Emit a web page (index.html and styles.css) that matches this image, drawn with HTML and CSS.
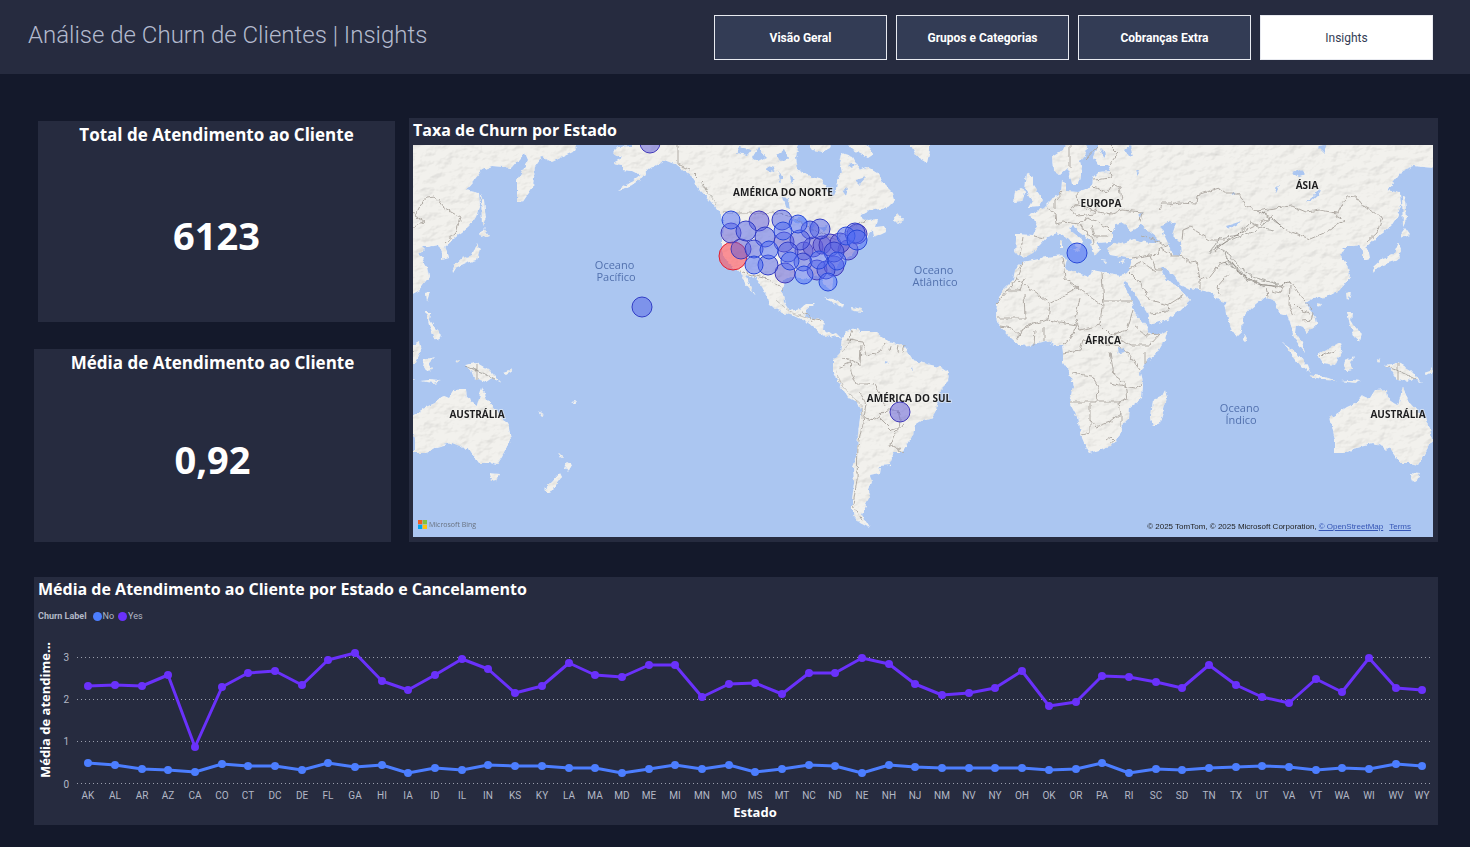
FILE: index.html
```html
<!DOCTYPE html>
<html lang="pt-BR">
<head>
<meta charset="utf-8">
<title>Análise de Churn de Clientes | Insights</title>
<link rel="stylesheet" href="styles.css">
</head>
<body>
<header class="topbar">
  <h1 class="page-title">Análise de Churn de Clientes | Insights</h1>
  <nav class="tabs">
    <button class="tab" type="button">Visão Geral</button>
    <button class="tab" type="button">Grupos e Categorias</button>
    <button class="tab" type="button">Cobranças Extra</button>
    <button class="tab tab-active" type="button" aria-current="page">Insights</button>
  </nav>
</header>
<main class="board">
  <div class="row">
    <div class="cards">
      <section class="card card-total">
        <h2 class="card-title">Total de Atendimento ao Cliente</h2>
        <p class="card-value">6123</p>
      </section>
      <section class="card card-average">
        <h2 class="card-title">Média de Atendimento ao Cliente</h2>
        <p class="card-value">0,92</p>
      </section>
    </div>
    <section class="panel map-panel">
      <h2 class="panel-title">Taxa de Churn por Estado</h2>
      <div class="map">
        <svg class="map-svg" viewBox="413 145 1020 392" role="img" aria-label="Mapa da taxa de churn por estado">
          <defs>
            <filter id="terrain" filterUnits="userSpaceOnUse" x="400" y="135" width="1110" height="410" color-interpolation-filters="sRGB">
              <feTurbulence type="fractalNoise" baseFrequency="0.18" numOctaves="2" seed="4" result="n"/>
              <feDisplacementMap in="SourceGraphic" in2="n" scale="5" xChannelSelector="R" yChannelSelector="G" result="land"/>
              <feTurbulence type="fractalNoise" baseFrequency="0.07 0.11" numOctaves="4" seed="9" result="h"/>
              <feColorMatrix in="h" type="matrix" values="0 0 0 0 0  0 0 0 0 0  0 0 0 0 0  1 0 0 0 0" result="ha"/>
              <feDiffuseLighting in="ha" surfaceScale="0.5" diffuseConstant="1.15" lighting-color="#ffffff" result="lit">
                <feDistantLight azimuth="225" elevation="60"/>
              </feDiffuseLighting>
              <feBlend in="land" in2="lit" mode="multiply" result="m"/>
              <feComposite in="m" in2="land" operator="in"/>
            </filter>
            <filter id="rough" filterUnits="userSpaceOnUse" x="400" y="135" width="1110" height="410" color-interpolation-filters="sRGB">
              <feTurbulence type="fractalNoise" baseFrequency="0.18" numOctaves="2" seed="4" result="n"/>
              <feDisplacementMap in="SourceGraphic" in2="n" scale="5" xChannelSelector="R" yChannelSelector="G"/>
            </filter>
            <g id="east">
              <path d="M1180 140L1180 285 1190 288 1200 290 1213 293 1218 300 1225 302 1228 320 1232 330 1237 337 1242 332 1243 317 1250 309 1257 303 1265 297 1273 300 1280 313 1287 315 1290 322 1293 334 1297 343 1305 353 1302 342 1296 333 1297 325 1302 327 1307 333 1317 325 1316 317 1309 309 1305 303 1313 298 1327 297 1340 290 1350 277 1348 267 1340 254 1345 250 1342 247 1350 247 1360 245 1363 252 1363 260 1370 258 1369 253 1366 247 1377 237 1383 233 1391 226 1397 217 1401 205 1400 193 1387 190 1394 182 1403 170 1413 166 1433 168 1446 153 1449 160 1438 180 1438 203 1443 203 1454 187 1456 167 1463 157 1473 162 1498 150 1496 140Z"/>
              <path d="M1330 418L1347 407 1356 403 1363 395 1370 398 1375 390 1387 389 1388 398 1398 405 1403 387 1408 400 1417 410 1424 418 1430 427 1432 440 1423 457 1418 465 1410 463 1400 463 1392 452 1389 447 1386 450 1383 447 1373 443 1357 447 1347 453 1335 453 1335 440Z"/>
              <path d="M1410 473L1420 474 1417 480 1413 481Z M1385 365L1398 363 1410 370 1423 383 1413 378 1407 382 1395 378 1392 370Z M1318 355L1330 348 1340 342 1342 350 1335 365 1323 363Z M1283 343L1293 350 1307 365 1310 373 1302 367 1290 353Z M1310 374L1325 377 1337 381 1325 380 1312 377Z M1345 360L1355 357 1350 362 1353 370 1347 371 1344 366Z M1347 312L1352 312 1351 320 1356 328 1362 334 1360 341 1354 336 1350 325Z M1347 293L1351 292 1348 301Z M1400 235L1405 228 1410 235 1402 238Z M1398 243L1401 250 1398 260 1388 263 1377 268 1374 273 1373 267 1383 258 1393 255Z M1402 195L1405 200 1407 218 1403 226Z M1244 334L1248 338 1246 343 1243 340Z M1317 303L1322 304 1319 308Z M1376 359L1381 360 1379 363Z M1341 381L1350 380 1362 381 1355 383Z M1424 373L1430 371 1432 368 1434 371 1427 375Z"/>
            </g>
            <g id="east-borders">
              <path d="M1170 205L1180 203 1196 204 1197 195 1219 188 1226 193 1238 193 1246 206 1257 211 1272 217 1284 229 1310 239 1324 233 1336 226 1345 221 1336 216 1340 208 1347 197 1356 196 1364 207 1382 217 1377 233 1366 243M1257 211L1275 208 1292 206 1306 212 1320 210 1336 213M1272 217L1262 222 1248 229 1228 240 1215 251M1182 240L1183 230 1190 227 1210 240 1225 240M1178 253L1190 262 1197 261 1200 280 1210 277 1220 264 1230 260M1200 280L1200 289M1230 272L1217 287 1220 295M1230 260L1240 274 1258 284 1279 287 1289 282 1294 286M1266 287L1268 297M1273 291L1280 293 1283 287M1290 285L1289 305 1294 315M1294 286L1303 300 1312 310M1292 302L1300 310 1310 313M1303 321L1311 320 1313 312M1398 364L1398 379M1320 356L1335 351"/>
            </g>
            <g id="east-ridges">
              <path d="M1222 250L1232 264 1246 277 1262 285 1280 286 1290 281M1224 254L1233 267 1248 280 1264 287M1215 245L1230 255 1236 264 1252 277 1278 284M1213 250L1226 242 1240 236 1255 231 1270 219M1208 254L1220 238 1238 235 1250 222 1262 228 1275 230M1262 213L1282 226M1224 262L1234 268M1386 366L1402 372 1416 379"/>
            </g>
          </defs>
          <rect x="413" y="145" width="1020" height="392" fill="#abc6f1"/>
          <g filter="url(#terrain)" fill="#f2f1ed">
            <path d="M633 140L633 146 618 147 613 152 616 156 622 158 613 163 622 165 622 170 632 171 636 173 640 175 632 181 618 190 630 187 640 180 648 170 656 165 664 160 677 165 690 175 700 190 712 203 720 212 723 223 722 237 722 250 728 263 740 272 745 283 756 296 750 285 746 275 755 277 762 287 768 298 770 305 783 313 797 317 807 322 813 327 822 335 830 338 836 336 842 339 836 333 831 335 823 329 824 319 815 318 805 317 807 310 815 303 807 303 800 309 790 311 784 301 782 290 784 281 792 276 800 278 808 279 820 274 823 283 832 290 833 282 831 272 840 263 850 257 856 249 860 243 867 237 873 230 874 238 886 232 884 226 876 227 878 220 868 221 860 216 873 209 888 207 895 200 893 193 883 183 877 173 867 167 860 170 853 157 842 153 840 163 842 173 837 180 836 190 833 197 827 190 822 180 807 175 798 170 796 157 800 140Z"/>
            <path d="M845 140L853 150 868 158 874 154 862 140Z M805 140L812 150 822 152 830 148 833 140Z M908 140L917 157 927 163 930 150 930 140Z M893 220L897 213 903 220 897 224Z M823 298L833 299 844 305 843 308 832 302Z M852 307L863 309 862 312 853 311Z"/>
            <path d="M842 338L847 332 857 328 860 332 877 332 883 337 888 342 903 345 908 352 913 360 923 363 940 367 949 373 948 382 940 390 938 403 933 417 923 420 915 425 913 435 908 443 902 452 892 452 893 458 890 465 880 466 879 473 870 475 872 482 868 492 870 497 865 507 862 515 870 528 860 523 852 513 852 500 854 483 853 467 857 453 858 433 861 410 858 403 847 397 840 385 833 373 833 360 840 353Z"/>
            <path d="M1023 262L1033 260 1047 257 1063 255 1067 260 1065 268 1077 273 1088 277 1092 270 1103 272 1120 275 1127 273 1130 268 1132 258 1127 258 1110 255 1107 248 1117 242 1110 242 1097 243 1100 250 1095 256 1092 248 1090 240 1080 232 1073 226 1069 229 1075 234 1083 241 1080 248 1070 242 1063 235 1057 233 1047 237 1038 247 1033 253 1023 258 1015 253 1016 240 1016 234 1033 235 1037 227 1034 219 1028 216 1043 208 1053 198 1061 193 1062 180 1066 184 1066 191 1077 192 1092 187 1093 177 1098 172 1110 171 1108 165 1098 165 1093 157 1097 147 1097 140 1185 140 1190 290 1180 285 1173 275 1164 268 1160 267 1167 280 1178 286 1184 292 1190 300 1180 310 1167 320 1150 325 1147 313 1137 297 1127 282 1123 283 1130 297 1135 313 1147 327 1150 334 1160 334 1168 330 1165 340 1157 353 1145 363 1140 373 1143 385 1142 398 1130 407 1129 418 1122 425 1120 435 1110 447 1090 453 1085 445 1080 433 1077 417 1069 402 1073 387 1070 372 1063 362 1063 353 1062 345 1053 345 1047 341 1030 345 1020 346 1010 337 997 323 996 315 997 303 1003 290 1013 280 1015 270Z"/>
            <path d="M1067 140L1063 150 1052 157 1053 170 1060 175 1068 168 1072 184 1078 184 1082 170 1080 162 1086 155 1088 140Z M1027 173L1033 177 1033 185 1043 200 1040 206 1028 207 1032 200 1025 190Z M1015 192L1022 188 1025 193 1022 202 1013 203Z M1165 390L1167 398 1160 423 1153 426 1151 417 1153 400 1162 396Z M1071 248L1080 248 1078 252Z M1060 240L1063 241 1063 248 1060 248Z M1100 260L1107 261 1106 263Z M1120 261L1125 260 1123 263Z"/>
            <use href="#east"/>
            <use href="#east" x="-921"/>
            <path d="M567 462L572 465 568 472 565 468Z M560 473L562 477 550 493 543 490 552 482Z M559 453L563 457 561 458Z M538 411L544 415 542 416Z M571 402L577 401 575 404Z"/>
          </g>
          <g filter="url(#rough)" fill="#abc6f1">
            <path d="M1112 242L1112 233 1117 224 1124 222 1130 231 1136 229 1140 224 1147 230 1156 237 1160 242 1150 243 1133 239 1122 243Z M1160 226L1168 222 1176 223 1172 235 1180 243 1181 256 1172 255 1168 243Z M1138 214L1142 211 1140 218Z M1306 202L1314 196 1320 188 1318 195 1310 202Z M1226 226L1242 221 1236 225 1228 229Z"/>
            <path d="M740 147L752 150 748 155 736 153Z M758 148L766 157 758 161 752 158Z M768 166L775 168 773 172 767 170Z M782 197L788 198 790 209 785 207Z M792 220L802 216 810 222 802 224 796 223Z M809 222L815 224 812 232 808 230Z M818 228L828 226 824 232Z M848 165L856 163 852 168Z M856 180L866 177 860 184Z M842 190L848 188 846 196Z M776 155L784 150 788 158 780 162Z M790 176L795 180 791 183Z M778 172L784 178 780 182Z M1118 349L1124 347 1125 353 1119 354Z M1100 148L1106 154 1103 158Z M1125 150L1130 146 1133 157 1129 156Z M1135 170L1139 172 1137 175Z M1232 190L1236 193 1232 195Z M1274 188L1279 186 1276 192Z M1292 172L1300 169 1306 175 1299 177Z M1318 146L1326 145 1325 153Z M884 361L889 362 886 364Z M912 367L913 371 911 369Z"/>
          </g>
          <g filter="url(#rough)" fill="none" stroke="#b0aba5" stroke-width="1">
            <use href="#east-borders"/>
            <use href="#east-borders" x="-921"/>
            <path d="M678 145L678 164 690 170 704 184 707 192M723 213L780 213 795 218 806 226 820 232 835 240 855 225 866 220M740 271L755 276 768 279 778 286 784 290M802 312L808 314 812 322M812 318L822 320"/>
            <path d="M852 331L848 340 862 342 866 355 879 352 886 343M889 350L890 345M897 352L898 345M903 352L905 346M840 358L850 359 860 365 861 345M850 359L851 371 856 384 867 384 874 385 880 395 885 406M860 392L866 404 864 418 874 420 880 416 886 410 898 410 900 420 899 428 892 430 880 418M905 424L895 433 890 445 904 452M864 418L858 445 857 480 853 505 862 520M838 368L849 363"/>
            <path d="M1023 262L1016 280 997 303M1025 278L1020 290 1007 290M1024 293L1025 318 998 318M1016 278L1050 304 1078 288 1065 278 1062 257M1078 288L1104 307 1102 273M1103 301L1133 301M1102 307L1100 325 1080 330 1075 318 1080 298M1050 304L1048 320 1033 324 1022 330 1016 340M1048 320L1077 325 1070 340 1062 345M1100 325L1110 335 1127 330 1133 310M1133 325L1145 335 1160 334 1150 345 1130 345 1115 335M1063 353L1080 350 1083 340 1115 345 1125 350 1140 370M1072 373L1092 376 1098 386 1097 402 1069 402M1110 352L1114 375 1125 383 1127 400 1120 402 1110 402 1098 402M1110 383L1135 388 1142 384M1090 403L1090 420 1096 427 1110 422 1120 414 1118 403 1128 397M1090 420L1090 433 1082 435M1107 440L1111 437 1114 440 1110 443M1121 414L1121 426M1000 326L1012 328 1020 335 1026 326 1033 324M1034 345L1035 330M1044 341L1044 327M1145 352L1145 364"/>
            <path d="M1023 237L1020 255M1035 236L1044 238M1046 207L1055 213 1056 224 1063 222 1078 224 1088 218 1098 222 1108 228 1112 232M1062 192L1055 200 1055 210M1077 192L1078 205 1070 209 1078 216 1094 214 1098 204M1078 205L1097 212 1112 214 1122 210 1142 212 1140 222M1093 187L1108 192 1112 185 1120 187 1122 200M1093 180L1112 178 1110 172M1080 224L1085 232 1092 236 1093 245M1092 226L1095 236 1108 236M1070 145L1070 168M1097 147L1085 160M1110 145L1118 153 1110 164M1142 235L1155 240 1168 248M1132 258L1150 255 1158 254 1160 247M1150 255L1156 270 1163 270M1130 268L1142 262 1156 272M1130 272L1138 280 1150 300 1168 305 1184 295M1168 305L1167 312 1150 314M1160 247L1172 256 1180 256M1160 210L1162 203 1172 203"/>
          </g>
          <g filter="url(#rough)" fill="none" stroke="#77736d" stroke-width="1" opacity="0.55">
            <use href="#east-ridges"/>
            <use href="#east-ridges" x="-921"/>
            <path d="M835 370L842 386 851 396 861 404 862 420M843 352L852 338M700 182L716 204M776 300L790 312 806 318" opacity="0.6"/>
          </g>
          <g class="place">
            <text x="783" y="196">AMÉRICA DO NORTE</text>
            <text x="1101" y="207">EUROPA</text>
            <text x="1307" y="189">ÁSIA</text>
            <text x="1103" y="344">ÁFRICA</text>
            <text x="909" y="402">AMÉRICA DO SUL</text>
            <text x="477" y="418">AUSTRÁLIA</text>
            <text x="1398" y="418">AUSTRÁLIA</text>
          </g>
          <g class="ocean">
            <text><tspan x="616" y="269">Oceano</tspan> <tspan x="616" y="281">Pacífico</tspan></text>
            <text><tspan x="935" y="274">Oceano</tspan> <tspan x="935" y="286">Atlântico</tspan></text>
            <text><tspan x="1241" y="412">Oceano</tspan> <tspan x="1241" y="424">Índico</tspan></text>
          </g>
          <g class="bubbles">
            <circle class="high" cx="733" cy="256" r="14"/>
            <g class="mid">
              <circle cx="650" cy="143" r="10"/><circle cx="900" cy="412" r="10"/>
              <circle cx="731" cy="233" r="10"/><circle cx="759" cy="221" r="10"/><circle cx="784" cy="242" r="10"/>
              <circle cx="741" cy="249" r="10"/><circle cx="785" cy="273" r="10"/><circle cx="804" cy="251" r="9"/>
              <circle cx="813" cy="247" r="10"/><circle cx="822" cy="245" r="9"/><circle cx="830" cy="245" r="11"/>
              <circle cx="817" cy="270" r="10"/><circle cx="834" cy="266" r="10"/><circle cx="848" cy="250" r="10"/>
              <circle cx="840" cy="243" r="10"/><circle cx="857" cy="234" r="10"/>
            </g>
            <g class="low">
              <circle cx="642" cy="307" r="10"/><circle cx="746" cy="231" r="10"/><circle cx="782" cy="220" r="10"/>
              <circle cx="820" cy="229" r="10"/><circle cx="810" cy="230" r="9"/><circle cx="800" cy="240" r="10"/>
              <circle cx="788" cy="252" r="10"/><circle cx="765" cy="237" r="10"/><circle cx="754" cy="249" r="9"/>
              <circle cx="768" cy="265" r="10"/><circle cx="803" cy="262" r="9"/><circle cx="826" cy="270" r="9"/>
              <circle cx="834" cy="252" r="10"/><circle cx="855" cy="233" r="10"/>
            </g>
            <g class="lowest">
              <circle cx="1077" cy="253" r="10"/><circle cx="731" cy="220" r="9"/><circle cx="798" cy="224" r="9"/>
              <circle cx="783" cy="231" r="9"/><circle cx="769" cy="250" r="9"/><circle cx="754" cy="265" r="9"/>
              <circle cx="790" cy="261" r="9"/><circle cx="804" cy="275" r="9"/><circle cx="819" cy="260" r="9"/>
              <circle cx="837" cy="261" r="9"/><circle cx="828" cy="282" r="9"/><circle cx="846" cy="236" r="9"/>
              <circle cx="857" cy="240" r="10"/>
            </g>
          </g>
        </svg>
        <div class="bing">
          <svg class="bing-logo" width="9" height="9" viewBox="0 0 9 9" aria-hidden="true">
            <rect width="4.300" height="4.300" fill="#f25c22"/><rect x="4.700" width="4.300" height="4.300" fill="#80c342"/>
            <rect y="4.700" width="4.300" height="4.300" fill="#00a4ef"/><rect x="4.700" y="4.700" width="4.300" height="4.300" fill="#ffc20e"/>
          </svg>
          <span>Microsoft Bing</span>
        </div>
        <div class="credits">
          <span>© 2025 TomTom, © 2025 Microsoft Corporation,</span>
          <a href="#osm">© OpenStreetMap</a>
          <a class="terms" href="#terms">Terms</a>
        </div>
      </div>
    </section>
  </div>
  <section class="panel chart-panel">
    <h2 class="panel-title">Média de Atendimento ao Cliente por Estado e Cancelamento</h2>
    <div class="legend">
      <span class="legend-title">Churn Label</span>
      <span class="legend-item"><i class="dot dot-no"></i>No</span>
      <span class="legend-item"><i class="dot dot-yes"></i>Yes</span>
    </div>
    <svg class="chart" viewBox="34 630 1404 195" role="img" aria-label="Média de atendimento por estado">
      <defs>
        <marker id="m-no" markerUnits="userSpaceOnUse" markerWidth="8" markerHeight="8" refX="4" refY="4"><circle cx="4" cy="4" r="4" fill="#4c7eff"/></marker>
        <marker id="m-yes" markerUnits="userSpaceOnUse" markerWidth="8" markerHeight="8" refX="4" refY="4"><circle cx="4" cy="4" r="4" fill="#6a31fb"/></marker>
      </defs>
      <path class="grid" d="M77 657.500H1431M77 699.500H1431M77 741.500H1431M77 783.500H1431"/>
      <g class="tick tick-y">
        <text x="69" y="661">3</text><text x="69" y="703">2</text><text x="69" y="745">1</text><text x="69" y="788">0</text>
      </g>
      <polyline class="line" stroke="#4c7eff" marker-start="url(#m-no)" marker-mid="url(#m-no)" marker-end="url(#m-no)" points="88,763 115,765 142,769 168,770 195,772 222,764 248,766 275,766 302,770 328,763 355,767 382,765 408,773 435,768 462,770 488,765 515,766 542,766 569,768 595,768 622,773 649,769 675,765 702,769 729,765 755,772 782,769 809,765 835,766 862,773 889,765 915,767 942,768 969,768 995,768 1022,768 1049,770 1076,769 1102,763 1129,773 1156,769 1182,770 1209,768 1236,767 1262,766 1289,767 1316,770 1342,768 1369,769 1396,764 1422,766"/>
      <polyline class="line" stroke="#6a31fb" marker-start="url(#m-yes)" marker-mid="url(#m-yes)" marker-end="url(#m-yes)" points="88,686 115,685 142,686 168,675 195,747 222,687 248,673 275,671 302,685 328,660 355,653 382,681 408,690 435,675 462,659 488,669 515,693 542,686 569,663 595,675 622,677 649,665 675,665 702,697 729,684 755,683 782,694 809,673 835,673 862,658 889,664 915,684 942,695 969,693 995,688 1022,671 1049,706 1076,702 1102,676 1129,677 1156,682 1182,688 1209,665 1236,685 1262,697 1289,703 1316,679 1342,692 1369,658 1396,688 1422,690"/>
      <g class="tick">
        <text x="88" y="799">AK</text><text x="115" y="799">AL</text><text x="142" y="799">AR</text><text x="168" y="799">AZ</text><text x="195" y="799">CA</text><text x="222" y="799">CO</text><text x="248" y="799">CT</text><text x="275" y="799">DC</text><text x="302" y="799">DE</text><text x="328" y="799">FL</text><text x="355" y="799">GA</text><text x="382" y="799">HI</text><text x="408" y="799">IA</text><text x="435" y="799">ID</text><text x="462" y="799">IL</text><text x="488" y="799">IN</text><text x="515" y="799">KS</text><text x="542" y="799">KY</text><text x="569" y="799">LA</text><text x="595" y="799">MA</text><text x="622" y="799">MD</text><text x="649" y="799">ME</text><text x="675" y="799">MI</text><text x="702" y="799">MN</text><text x="729" y="799">MO</text><text x="755" y="799">MS</text><text x="782" y="799">MT</text><text x="809" y="799">NC</text><text x="835" y="799">ND</text><text x="862" y="799">NE</text><text x="889" y="799">NH</text><text x="915" y="799">NJ</text><text x="942" y="799">NM</text><text x="969" y="799">NV</text><text x="995" y="799">NY</text><text x="1022" y="799">OH</text><text x="1049" y="799">OK</text><text x="1076" y="799">OR</text><text x="1102" y="799">PA</text><text x="1129" y="799">RI</text><text x="1156" y="799">SC</text><text x="1182" y="799">SD</text><text x="1209" y="799">TN</text><text x="1236" y="799">TX</text><text x="1262" y="799">UT</text><text x="1289" y="799">VA</text><text x="1316" y="799">VT</text><text x="1342" y="799">WA</text><text x="1369" y="799">WI</text><text x="1396" y="799">WV</text><text x="1422" y="799">WY</text>
      </g>
      <text class="axis-title" x="755" y="817">Estado</text>
      <text class="axis-title" transform="translate(50 710) rotate(-90)">Média de atendime...</text>
    </svg>
  </section>
</main>
</body>
</html>
```
FILE: styles.css
```css
* { box-sizing: border-box; }
body {
  margin: 0;
  min-height: 100vh;
  background: #14192b;
  color: #fff;
  font-family: "Open Sans", "Noto Sans", sans-serif;
}
h1, h2, p { margin: 0; }
.topbar {
  display: flex;
  align-items: flex-start;
  justify-content: space-between;
  height: 74px;
  padding: 15px 37px 0 28px;
  background: #262b3f;
}
.page-title {
  font: 300 24px/40px Roboto, sans-serif;
  color: #b3bace;
}
.tabs { display: flex; gap: 9px; }
.tab {
  width: 173px;
  height: 45px;
  padding: 0;
  border: 1px solid #e8eaf0;
  background: #333c55;
  color: #fff;
  font: 700 12px/16px Roboto, sans-serif;
}
.tab-active {
  background: #fff;
  color: #333c55;
  font-weight: 400;
}
.board {
  display: flex;
  flex-direction: column;
  gap: 35px;
  padding: 44px 32px 20px 34px;
}
.row {
  display: grid;
  grid-template-columns: 361fr 1029fr;
  gap: 14px;
}
.cards {
  display: flex;
  flex-direction: column;
  gap: 27px;
  padding-top: 3px;
}
.card {
  display: flex;
  flex-direction: column;
  background: #262b3f;
}
.card-total { flex: 201; margin-left: 4px; }
.card-average { flex: 193; margin-right: 4px; }
.card-title {
  font-size: 17px;
  line-height: 27px;
  font-weight: 700;
  text-align: center;
}
.card-value {
  flex: 1;
  display: flex;
  align-items: center;
  justify-content: center;
  font-size: 38px;
  line-height: 48px;
  font-weight: 700;
}
.panel { background: #262b3f; }
.panel-title {
  font-size: 16px;
  line-height: 25px;
  font-weight: 700;
}
.map-panel { padding: 0 5px 5px 4px; }
.map-panel .panel-title { padding-bottom: 2px; }
.map { position: relative; }
.map-svg { display: block; width: 100%; }
.place {
  fill: #1d1d1f;
  font-size: 10px;
  font-weight: 700;
  text-anchor: middle;
  stroke: #f6f5f2;
  stroke-width: 2px;
  stroke-opacity: 0.5;
  paint-order: stroke;
}
.ocean {
  fill: #5271ae;
  font-size: 11px;
  text-anchor: middle;
}
.bubbles circle { stroke-width: 1px; }
.bubbles .high { fill: rgba(255, 80, 90, 0.6); stroke: #e02030; }
.mid { fill: rgba(90, 85, 215, 0.5); stroke: #4038b8; }
.low { fill: rgba(80, 95, 230, 0.5); stroke: #303cc4; }
.lowest { fill: rgba(75, 105, 245, 0.5); stroke: #2848d8; }
.bing {
  position: absolute;
  left: 5px;
  bottom: 7px;
  display: flex;
  align-items: center;
  gap: 2px;
  color: #68717f;
  font-size: 7px;
  line-height: 11px;
}
.credits {
  position: absolute;
  right: 22px;
  bottom: 5px;
  display: flex;
  gap: 2px;
  color: #222;
  font: 8px/11px "Liberation Sans", sans-serif;
}
.credits a { color: #3555b5; }
.terms { margin-left: 4px; }
.chart-panel .panel-title { padding-left: 4px; }
.legend {
  display: flex;
  align-items: center;
  gap: 4px;
  padding: 8px 4px 7px;
  color: #b3b8c6;
  font: 9px/13px Roboto, sans-serif;
}
.legend-title { margin-right: 2px; font-weight: 700; }
.legend-item { display: flex; align-items: center; gap: 1px; }
.dot { width: 9px; height: 9px; border-radius: 50%; }
.dot-no { background: #4c7eff; }
.dot-yes { background: #6a31fb; }
.chart { display: block; width: 100%; }
.grid { stroke: #9a9eac; stroke-width: 1px; stroke-dasharray: 1 3; }
.line { fill: none; stroke-width: 3px; stroke-linejoin: round; }
.tick {
  fill: #b3b8c6;
  font: 10px Roboto, sans-serif;
  text-anchor: middle;
}
.tick-y { text-anchor: end; }
.axis-title {
  fill: #fff;
  font-size: 13px;
  font-weight: 700;
  text-anchor: middle;
}
```
